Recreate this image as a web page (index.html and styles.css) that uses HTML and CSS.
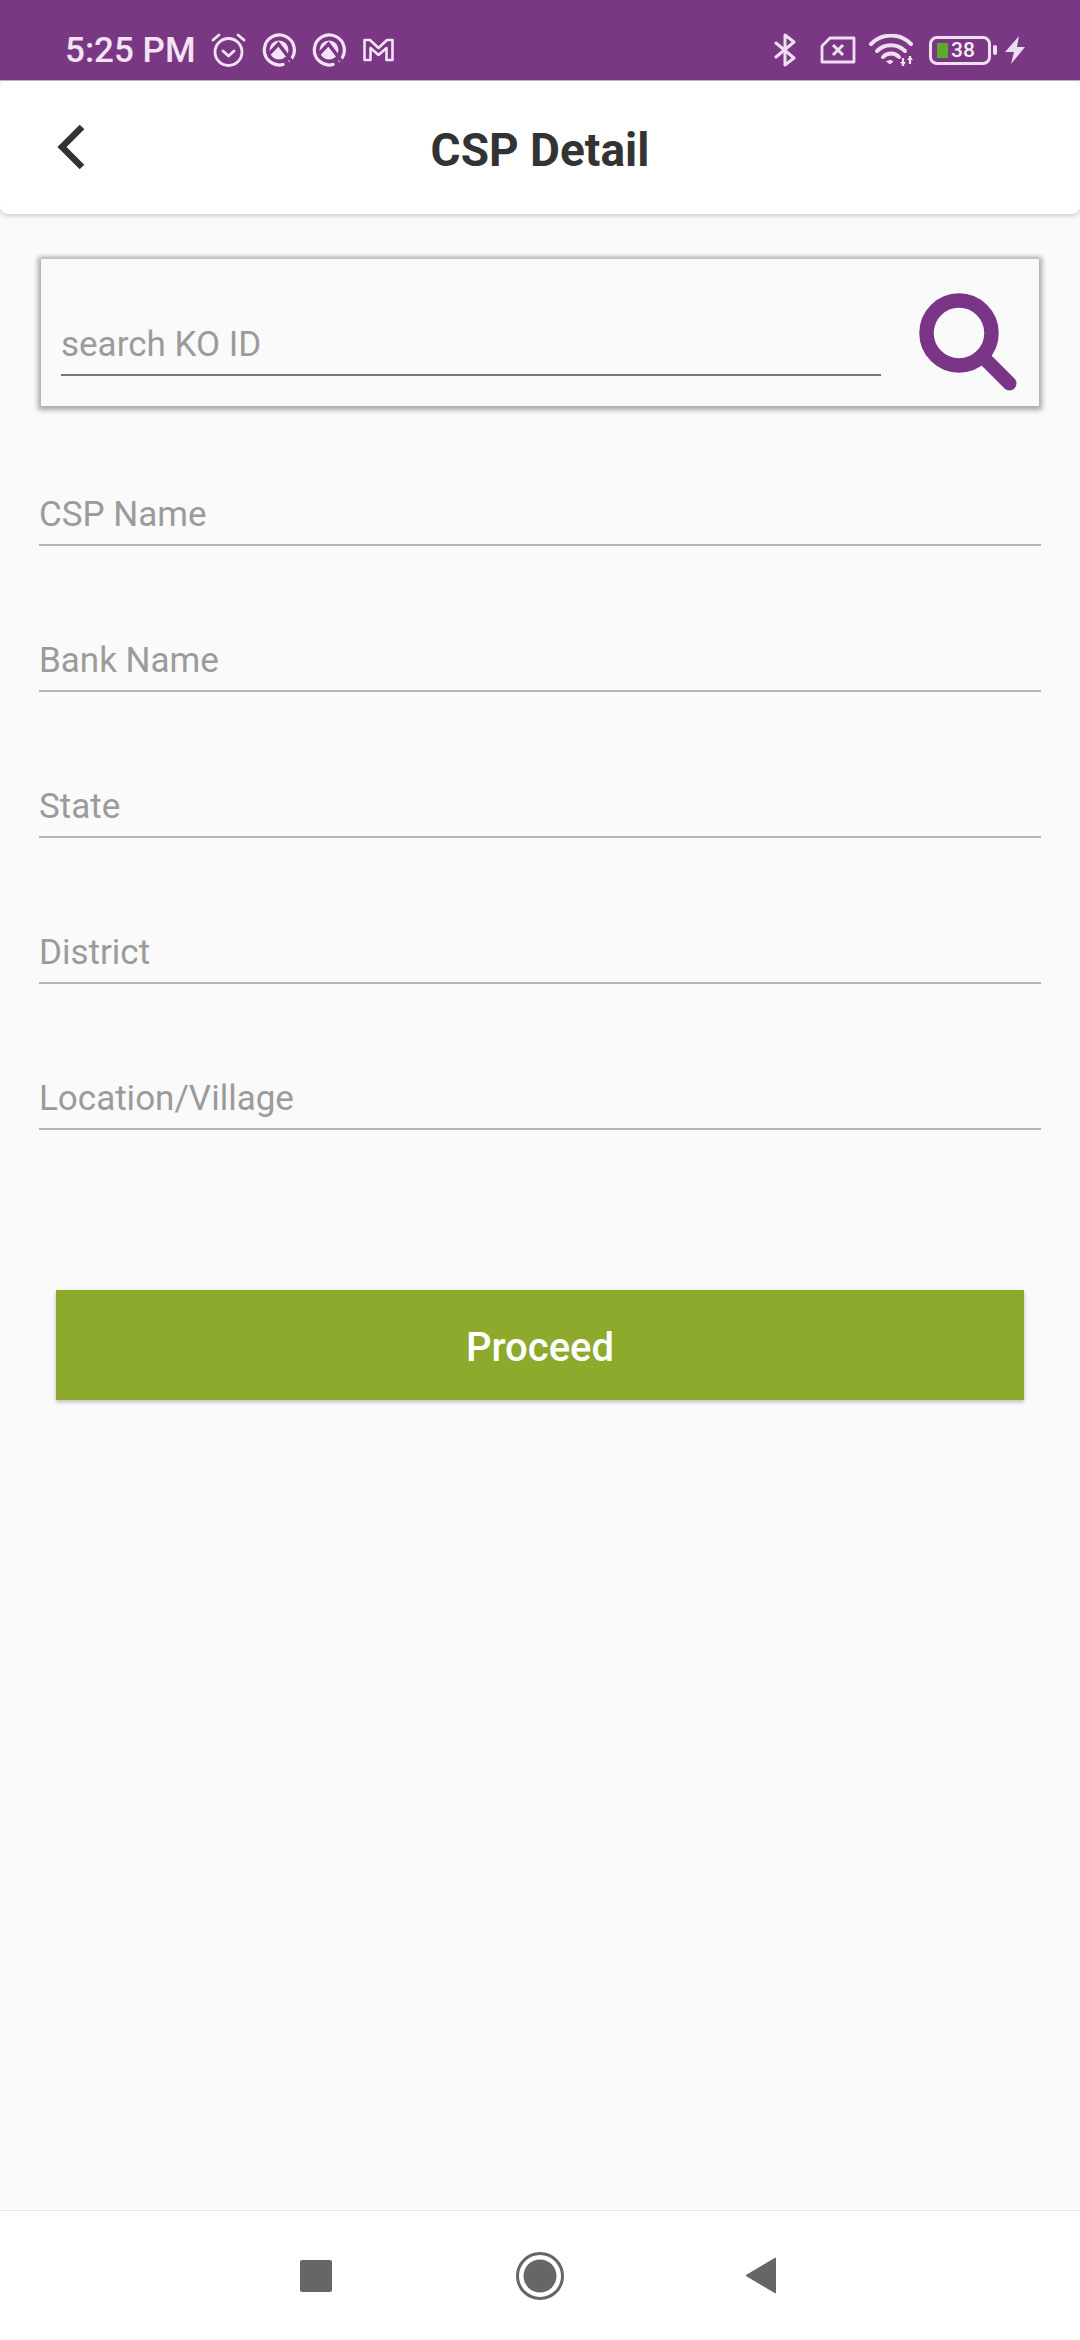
FILE: index.html
```html
<!DOCTYPE html>
<html lang="en">
<head>
    <meta charset="UTF-8">
    <meta name="viewport" content="width=device-width, initial-scale=1.0">
    <title>CSP Detail</title>
    <link rel="stylesheet" href="styles.css">
</head>
<body>

    <div id="container">
        <div class="status-bar">
            <span class="clock">5:25 PM</span>
            <svg class="ico ico-alarm" width="35" height="36" viewBox="0 0 35 36" fill="none" stroke="#f3e3f5" stroke-width="2.800" stroke-linecap="round" stroke-linejoin="round">
                <circle cx="17.500" cy="20" r="13.500"/>
                <path d="M12 19l5.500 5 5.500-5"/>
                <path d="M2 8l6-5M33 8l-6-5"/>
            </svg>
            <svg class="ico ico-q" width="34" height="34" viewBox="0 0 34 34" fill="none" stroke="#f3e3f5" stroke-width="3.200" stroke-linecap="round">
                <path d="M28 27.500A15 15 0 1 0 21 31.500"/>
                <circle cx="17" cy="17" r="9.500" fill="#f3e3f5" stroke="none"/>
                <path d="M7 21L16.500 11 31 30" stroke="#7a3783" stroke-width="3.500" stroke-linecap="butt"/>
            </svg>
            <svg class="ico ico-q" width="34" height="34" viewBox="0 0 34 34" fill="none" stroke="#f3e3f5" stroke-width="3.200" stroke-linecap="round">
                <path d="M28 27.500A15 15 0 1 0 21 31.500"/>
                <circle cx="17" cy="17" r="9.500" fill="#f3e3f5" stroke="none"/>
                <path d="M7 21L16.500 11 31 30" stroke="#7a3783" stroke-width="3.500" stroke-linecap="butt"/>
            </svg>
            <svg class="ico ico-mail" width="31" height="24" viewBox="0 0 31 24" fill="none" stroke="#f3e3f5" stroke-width="2.600" stroke-linejoin="round">
                <path d="M1.500 2h5.500l8.500 8 8.500-8h5.500v20h-6V10l-8 7-8-7v12h-6z"/>
            </svg>

            <div class="status-right">
                <svg class="ico" width="22" height="34" viewBox="0 0 22 34" fill="none" stroke="#f0dff3" stroke-width="3" stroke-linecap="round" stroke-linejoin="round">
                    <path d="M2 10l18 15-9 7V2l9 7L2 24"/>
                </svg>
                <svg class="ico ico-sim" width="36" height="28" viewBox="0 0 36 28" fill="none" stroke="#f0dff3" stroke-width="2.800" stroke-linejoin="round">
                    <path d="M10 2h24v24H2V10z"/>
                    <path d="M13 9l10 10M23 9L13 19" stroke-width="3"/>
                </svg>
                <svg class="ico ico-wifi" width="46" height="33" viewBox="0 0 46 33" fill="none" stroke="#f0dff3" stroke-width="4" stroke-linecap="round">
                    <path d="M2 10a28 28 0 0 1 40 0"/>
                    <path d="M8 17a20 20 0 0 1 28 0"/>
                    <path d="M14 23a11 11 0 0 1 16 0"/>
                    <path d="M18 27.500L21 30l3-2.500a5 5 0 0 0-6 0z" fill="#f0dff3" stroke-width="1"/>
                    <path d="M34 24v8M41 22v8" stroke-width="2.200" stroke-linecap="butt"/>
                    <path d="M31 28l3 4 3-4M38 26l3-4 3 4" stroke="none" fill="#f0dff3"/>
                </svg>
                <div class="battery">
                    <span class="battery-level"></span>
                    <span class="battery-num">38</span>
                </div>
                <span class="battery-nub"></span>
                <svg class="ico ico-bolt" width="20" height="28" viewBox="0 0 20 28">
                    <path d="M14 0L0 16h9L6 28l14-17h-8z" fill="#ecdcf0"/>
                </svg>
            </div>
        </div>

        <div class="app-bar">
            <svg class="back" width="30" height="46" viewBox="0 0 30 46" fill="none" stroke="#333" stroke-width="6.500">
                <path d="M26 2L6 22l20 20"/>
            </svg>
            <h1>CSP Detail</h1>
        </div>

        <div class="content">
            <div class="search-card">
                <div class="search-input">search KO ID</div>
                <svg class="search-ico" width="98" height="98" viewBox="0 0 98 98" fill="none" stroke="#7a3587" stroke-linecap="round">
                    <circle cx="40" cy="40" r="32.500" stroke-width="14.500"/>
                    <path d="M65.500 65.500l25 25" stroke-width="14"/>
                </svg>
            </div>

            <div class="field">CSP Name</div>
            <div class="field">Bank Name</div>
            <div class="field">State</div>
            <div class="field">District</div>
            <div class="field">Location/Village</div>

            <button type="button" class="proceed">Proceed</button>
        </div>

        <div class="nav-bar">
            <span class="nav-square"></span>
            <svg class="nav-home" width="48" height="48" viewBox="0 0 48 48">
                <circle cx="24" cy="24" r="22.500" fill="none" stroke="#666" stroke-width="3"/>
                <circle cx="24" cy="24" r="16.500" fill="#666"/>
            </svg>
            <svg class="nav-back" width="31" height="37" viewBox="0 0 31 37">
                <path d="M30.500 1L1 18.500 30.500 36z" fill="#666" stroke="#666" stroke-width="1" stroke-linejoin="round"/>
            </svg>
        </div>
    </div>

</body>
</html>
```

FILE: styles.css
```css
html, body {
    margin: 0;
    padding: 0;
    background-color: #fafafa;
}

#container {
    width: 1080px;
    height: 2340px;
    display: flex;
    flex-direction: column;
    font-family: Roboto, "Liberation Sans", sans-serif;
    overflow: hidden;
}

.ico {
    display: block;
    flex: none;
}

/* status bar */
.status-bar {
    height: 81px;
    box-sizing: border-box;
    flex: none;
    display: flex;
    align-items: center;
    padding: 20px 0 0 65px;
    background-color: #7a3783;
    border-bottom: 1px solid #c5b0c9;
    color: #f3e3f5;
}

.clock {
    font-size: 35px;
    font-weight: 500;
    width: 146px;
}

.ico-q {
    margin-left: 16px;
}

.ico-mail {
    margin-left: 17px;
}

.status-right {
    margin-left: auto;
    display: flex;
    align-items: center;
    padding-right: 55px;
}

.ico-sim {
    margin-left: 24px;
}

.ico-wifi {
    margin-left: 13px;
}

.battery {
    margin-left: 14px;
    width: 62px;
    height: 29px;
    box-sizing: border-box;
    border: 3px solid #f0dff3;
    border-radius: 8px;
    display: flex;
    align-items: center;
    padding-left: 5px;
    gap: 3px;
}

.battery-level {
    width: 11px;
    height: 15px;
    background-color: #5cab2c;
}

.battery-num {
    font-size: 21px;
    font-weight: 500;
    line-height: 1;
    color: #f6ecf8;
}

.battery-nub {
    width: 4px;
    height: 10px;
    margin-left: 2px;
    border-radius: 2px;
    background-color: #f0dff3;
}

.ico-bolt {
    margin-left: 8px;
}

/* app bar */
.app-bar {
    height: 133px;
    flex: none;
    display: grid;
    grid-template-columns: 1fr auto 1fr;
    align-items: center;
    background-color: #fff;
    border-radius: 8px;
    box-shadow: 0 2px 4px rgba(0, 0, 0, 0.18);
}

.back {
    margin-left: 56px;
}

.app-bar h1 {
    margin: 4px 0 0;
    font-size: 46px;
    font-weight: 700;
    color: #333;
}

/* form */
.content {
    flex: 1;
    display: flex;
    flex-direction: column;
    padding: 45px 39px 0;
}

.search-card {
    height: 147px;
    margin: 0 2px 0 2px;
    display: flex;
    align-items: flex-start;
    background-color: #fafafa;
    box-shadow: 0 1px 5px 3px rgba(0, 0, 0, 0.33);
}

.search-input {
    width: 820px;
    height: 117px;
    box-sizing: border-box;
    margin-left: 20px;
    padding: 64px 0 0;
    border-bottom: 2px solid #757575;
    font-size: 35px;
    line-height: 44px;
    color: #9b9b9b;
}

.search-ico {
    margin: 34px 0 0 38px;
}

.field {
    height: 48px;
    margin-top: 98px;
    box-sizing: border-box;
    border-bottom: 2px solid #b5b5b5;
    font-size: 35px;
    line-height: 33px;
    color: #9b9b9b;
}

.search-card + .field {
    margin-top: 92px;
}

.proceed {
    height: 110px;
    margin: 160px 17px 0;
    padding: 5px 0 0;
    border: none;
    background-color: #8daa2c;
    color: #fff;
    font-family: inherit;
    font-size: 40px;
    font-weight: 500;
    box-shadow: 0 2px 4px rgba(0, 0, 0, 0.25);
}

/* bottom nav */
.nav-bar {
    height: 130px;
    box-sizing: border-box;
    flex: none;
    display: flex;
    align-items: center;
    padding-left: 300px;
    background-color: #fff;
    border-top: 1px solid #e6e6e6;
}

.nav-square {
    width: 32px;
    height: 32px;
    border-radius: 2px;
    background-color: #666;
}

.nav-home {
    margin-left: 184px;
}

.nav-back {
    margin-left: 181px;
}
```
